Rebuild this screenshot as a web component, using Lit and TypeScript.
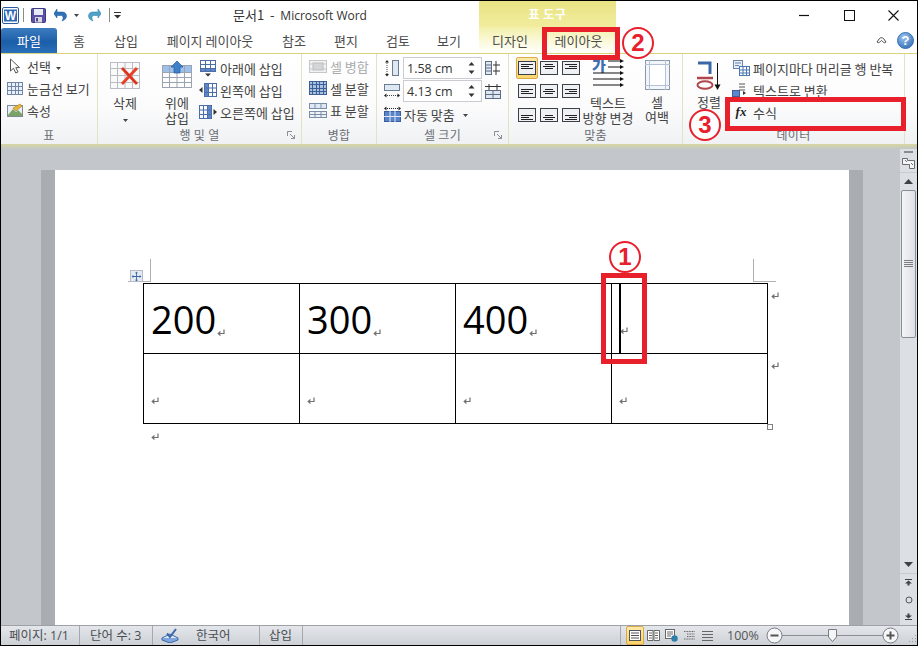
import { LitElement, html, css, svg } from "lit";
import { customElement } from "lit/decorators.js";

const grid = (w: number, h: number, cols: number, rows: number, stroke = "#8d9bb0", fill = "#fff") => {
  const v = [];
  for (let i = 0; i <= cols; i++) v.push(Math.round((i * (w - 1)) / cols) + 0.5);
  const r = [];
  for (let i = 0; i <= rows; i++) r.push(Math.round((i * (h - 1)) / rows) + 0.5);
  return html`<svg width="${w}" height="${h}" viewBox="0 0 ${w} ${h}"><rect x=".5" y=".5" width="${w - 1}" height="${h - 1}" fill="${fill}"/>${v.map((x) => svg`<line x1="${x}" x2="${x}" y1="0" y2="${h}" stroke="${stroke}"/>`)}${r.map((y) => svg`<line y1="${y}" y2="${y}" x1="0" x2="${w}" stroke="${stroke}"/>`)}</svg>`;
};

const mark = html`<svg class="pm" width="8" height="8" viewBox="0 0 8 8"><path d="M7 .5V4.5H1.5M3.5 2.5L1.2 4.5L3.5 6.5" fill="none" stroke="#707070" stroke-width="1.2"/></svg>`;

const align = (h: number, v: number) => {
  const ys = [[3, 5, 7], [5, 7, 9], [7, 9, 11]][v];
  const lens = [[12, 8, 12], [8, 12, 8], [12, 12, 8]];
  return html`<svg width="18" height="14" viewBox="0 0 18 14"><rect x=".5" y=".5" width="17" height="13" fill="#eef0f3" stroke="#3c3f45"/>${ys.map((y, i) => {
    const l = h === 1 ? lens[1][i] : lens[0][i];
    const x = h === 0 ? 3 : h === 1 ? (18 - l) / 2 : 15 - l;
    return svg`<rect x="${x}" y="${y}" width="${l}" height="1" fill="#222"/>`;
  })}</svg>`;
};

const I = {
  word: html`<svg width="17" height="17" viewBox="0 0 17 17"><rect x=".5" y=".5" width="16" height="16" rx="1.5" fill="#fff" stroke="#2b5a9e"/><rect x="2" y="2.5" width="13" height="12" fill="#2f68b4"/><text x="8.5" y="13" text-anchor="middle" font-family="Liberation Sans" font-weight="700" font-size="12" fill="#fff">W</text></svg>`,
  save: html`<svg width="15" height="15" viewBox="0 0 15 15"><rect x=".5" y=".5" width="14" height="14" rx="1" fill="#5b4fa6" stroke="#3a3a80"/><rect x="3" y="1" width="9" height="6" fill="#e8eaf4"/><rect x="4" y="9" width="7" height="5.5" fill="#d5d8e2"/><rect x="5" y="10" width="2" height="3.5" fill="#4a4a8a"/></svg>`,
  undo: html`<svg width="14" height="14" viewBox="0 0 14 14"><path d="M3 4H8.5C11 4 12.5 6 12.5 8C12.5 10 11 12 8 13C9.5 11 9.5 7.5 7.5 7.5H3V10L-.2 5.6L3 1Z" fill="#2f72b8" stroke="#1f558f" stroke-width=".5"/></svg>`,
  redo: html`<svg width="14" height="14" viewBox="0 0 14 14"><path d="M11 4H5.5C3 4 1.5 6 1.5 8C1.5 10 3 12 6 13C4.5 11 4.5 7.5 6.5 7.5H11V10L14.2 5.6L11 1Z" fill="#4fa3c9" stroke="#2d7ba3" stroke-width=".5"/></svg>`,
  drop: html`<svg width="5" height="3" viewBox="0 0 5 3"><path d="M0 0H5L2.5 3Z" fill="#444"/></svg>`,
  qatmore: html`<svg width="7" height="7" viewBox="0 0 7 7"><rect y="0" width="7" height="1" fill="#333"/><path d="M0 3H7L3.5 6.5Z" fill="#333"/></svg>`,
  min: html`<svg width="12" height="12" viewBox="0 0 12 12"><path d="M1 6.5H11" stroke="#111" stroke-width="1.2"/></svg>`,
  max: html`<svg width="11" height="11" viewBox="0 0 11 11"><rect x=".5" y=".5" width="10" height="10" fill="none" stroke="#111"/></svg>`,
  close: html`<svg width="11" height="11" viewBox="0 0 11 11"><path d="M.5 .5L10.5 10.5M10.5 .5L.5 10.5" stroke="#111" stroke-width="1.1"/></svg>`,
  up: html`<svg width="11" height="8" viewBox="0 0 11 8"><path d="M1 6L3.5 2.5C4.5 1.5 6.5 1.5 7.5 2.5L10 6C9 7.5 7.5 6.5 5.5 4.5C3.5 6.5 2 7.5 1 6Z" fill="none" stroke="#444"/></svg>`,
  help: html`<svg width="17" height="17" viewBox="0 0 17 17"><defs><radialGradient id="h" cx=".4" cy=".3" r=".8"><stop offset="0" stop-color="#9cc4ee"/><stop offset="1" stop-color="#2d6bb5"/></radialGradient></defs><circle cx="8.5" cy="8.5" r="8" fill="url(#h)" stroke="#3a72b5"/><text x="8.5" y="13" text-anchor="middle" font-family="Liberation Sans" font-weight="700" font-size="13" fill="#fff">?</text></svg>`,
  select: html`<svg width="14" height="16" viewBox="0 0 14 16"><path d="M2.5 1V13L5.5 10.2L7.8 15L10 14L7.8 9.6H11.5Z" fill="#fff" stroke="#555"/></svg>`,
  props: html`<svg width="16" height="14" viewBox="0 0 16 14"><rect x=".5" y="2.5" width="15" height="11" fill="#e8eef4" stroke="#7d8a9c"/><path d="M1 12L6 6L9 9L11 7L15 11V13H1Z" fill="#7aa366"/><path d="M6 5L13 1L15 3L9 8Z" fill="#e9b53c" stroke="#a67a18" stroke-width=".6"/></svg>`,
  del: html`<svg width="30" height="28" viewBox="0 0 30 28"><g stroke="#b9bcc2" fill="none"><rect x=".5" y=".5" width="29" height="26" fill="#fafafa"/><path d="M.5 6.5H30M.5 13.5H30M.5 20.5H30M7.5 0V27M15 0V27M22.5 0V27"/></g><path d="M12 6L27 22M27 6L12 22" stroke="#e8412a" stroke-width="3"/><path d="M12 6L27 22" stroke="#c2281a" stroke-width="1"/></svg>`,
  above: html`<svg width="30" height="28" viewBox="0 0 30 28"><rect x=".5" y="4.5" width="29" height="7" fill="#9dc0ea"/><g stroke="#9aa3af" fill="none"><rect x=".5" y="4.5" width="29" height="22" fill="none"/><path d="M.5 11.5H30M.5 16.5H30M.5 21.5H30M7.5 4V27M15 4V27M22.5 4V27"/></g><path d="M15 0L21 6H18V12H12V6H9Z" fill="#3f80c8" stroke="#1d5a9e" stroke-width=".7"/></svg>`,
  below: html`<svg width="16" height="17" viewBox="0 0 16 17"><rect x=".5" y="8.5" width="15" height="3" fill="#5f86c8"/><g stroke="#4a6ea8" fill="none"><rect x=".5" y=".5" width="15" height="11"/><path d="M.5 4.5H16M.5 8.5H16M5.5 0V12M10.5 0V12"/></g><path d="M8 16.5L5 13.5H11Z" fill="#333"/></svg>`,
  left: html`<svg width="18" height="14" viewBox="0 0 18 14"><rect x="5.5" y=".5" width="4" height="13" fill="#5f86c8"/><g stroke="#4a6ea8" fill="none"><rect x="5.5" y=".5" width="12" height="13"/><path d="M9.5 0V14M13.5 0V14M5 5H18M5 9.5H18"/></g><path d="M0 7L3.5 4V10Z" fill="#333"/></svg>`,
  right: html`<svg width="18" height="14" viewBox="0 0 18 14"><rect x="8.5" y=".5" width="4" height="13" fill="#5f86c8"/><g stroke="#4a6ea8" fill="none"><rect x=".5" y=".5" width="12" height="13"/><path d="M4.5 0V14M8.5 0V14M0 5H13M0 9.5H13"/></g><path d="M18 7L14.5 4V10Z" fill="#333"/></svg>`,
  merge: html`<svg width="18" height="13" viewBox="0 0 18 13"><rect x=".5" y=".5" width="17" height="12" fill="#f2f2f2" stroke="#c4c6c9"/><rect x="4" y="3" width="10" height="7" fill="#d4d5d7" stroke="#bcbdc0"/><path d="M0 4H4M0 9H4M14 4H18M14 9H18" stroke="#c4c6c9"/></svg>`,
  tsplit: html`<svg width="18" height="15" viewBox="0 0 18 15"><rect x=".5" y=".5" width="17" height="5" fill="#dfe8f3" stroke="#7a8ea8"/><rect x=".5" y="8.5" width="17" height="6" fill="#eef2f7" stroke="#7a8ea8"/><path d="M6 0V6M12 0V6M6 8V15M12 8V15M0 11.5H18" stroke="#7a8ea8"/></svg>`,
  rowh: html`<svg width="16" height="17" viewBox="0 0 16 17"><path d="M3 1V15" stroke="#444" stroke-dasharray="1 1"/><path d="M3 0L1 2.5H5ZM3 16.5L1 14H5Z" fill="#222"/><rect x="8.5" y=".5" width="6" height="15" fill="#dfe7f1" stroke="#6a7c94"/></svg>`,
  colw: html`<svg width="16" height="17" viewBox="0 0 16 17"><rect x=".5" y="1.5" width="15" height="6" fill="#dfe7f1" stroke="#6a7c94"/><path d="M1 12.5H15" stroke="#444" stroke-dasharray="1 1"/><path d="M0 12.5L2.5 10.5V14.5ZM16 12.5L13.5 10.5V14.5Z" fill="#222"/></svg>`,
  distr: html`<svg width="16" height="15" viewBox="0 0 16 15"><rect x=".5" y=".5" width="6" height="13" fill="#dfe7f1" stroke="#5c6d85"/><path d="M1 7H6M1 4H6M1 10H6" stroke="#5c6d85"/><path d="M8 4H15M8 10H15" stroke="#333"/><path d="M11 0V14" stroke="#333"/></svg>`,
  distc: html`<svg width="16" height="15" viewBox="0 0 16 15"><rect x=".5" y="6.5" width="15" height="8" fill="#dfe7f1" stroke="#5c6d85"/><path d="M8 6V15M0 10.5H16" stroke="#5c6d85"/><path d="M0 2.5H16M4 0V6M12 0V6" stroke="#333"/></svg>`,
  fit: html`<svg width="17" height="16" viewBox="0 0 17 16"><rect x=".5" y="5.5" width="16" height="10" fill="#5a84c8" stroke="#3a5f9e"/><path d="M0 10.5H17M6 5V16M11 5V16" stroke="#dfe8f5"/><path d="M1 2.5H16" stroke="#222" stroke-dasharray="1 1"/><path d="M0 2.5L2.5 .5V4.5ZM17 2.5L14.5 .5V4.5Z" fill="#222"/></svg>`,
  tdir: html`<svg width="32" height="33" viewBox="0 0 32 33" style="overflow:visible"><text x="0" y="13" font-family="Noto Sans CJK KR" font-weight="900" font-size="15" fill="#3d6fb4">가</text><g stroke="#111" fill="#111"><path d="M16 3H29M16 9H29M1 15H29M1 21H29M1 27H29" fill="none"/><path d="M32 3L28 1V5ZM32 9L28 7V11ZM32 15L28 13V17ZM32 21L28 19V23ZM32 27L28 25V29Z" stroke="none"/></g></svg>`,
  margin: html`<svg width="25" height="30" viewBox="0 0 25 30"><rect x=".5" y=".5" width="24" height="29" fill="#f2f5f9" stroke="#8a98aa"/><rect x="4.5" y="4.5" width="16" height="21" fill="#fff" stroke="#b3c2d4"/><path d="M0 4.5H25M0 25.5H25M4.5 0V30M20.5 0V30" stroke="#b3c2d4"/></svg>`,
  sort: html`<svg width="28" height="32" viewBox="0 0 28 32"><path d="M3 4H15V15" fill="none" stroke="#3a67a8" stroke-width="3"/><path d="M2 19H18" stroke="#b0454a" stroke-width="2.5"/><ellipse cx="10" cy="26" rx="7.5" ry="3.8" fill="none" stroke="#b0454a" stroke-width="2"/><path d="M22.5 4V27" stroke="#111"/><path d="M22.5 31L19.5 25.5H25.5Z" fill="#111"/></svg>`,
  repeat: html`<svg width="19" height="18" viewBox="0 0 19 18"><rect x="1.5" y="1.5" width="9" height="8" fill="#e8eff8" stroke="#6a83a8"/><rect x="7.5" y="7.5" width="10" height="9" fill="#fff" stroke="#4a78b0"/><path d="M7 11H18M7 14H18M11 7V17M14.5 7V17" stroke="#4a78b0"/><path d="M3 4H9M3 6.5H7" stroke="#6a83a8"/></svg>`,
  conv: html`<svg width="18" height="14" viewBox="0 0 18 14"><path d="M7 1H13M7 4H13M7 7H13" stroke="#555"/><rect x=".5" y="7.5" width="7" height="6" fill="#5f86c8" stroke="#3a5f9e"/><path d="M14 10L11 8V12Z" fill="#333"/></svg>`,
  launcher: html`<svg width="8" height="8" viewBox="0 0 8 8"><path d="M.5 5V.5H5" fill="none" stroke="#8b8e92"/><path d="M3 3L7.5 7.5M7.5 4V7.5H4" fill="none" stroke="#8b8e92"/></svg>`,
  spin: html`<svg width="7" height="16" viewBox="0 0 7 16"><path d="M3.5 2L6.5 5.5H.5ZM3.5 14L.5 10.5H6.5Z" fill="#333"/></svg>`,
  move: html`<svg width="11" height="11" viewBox="0 0 11 11"><path d="M5.5 0L7.2 2H6V5H9V3.8L11 5.5L9 7.2V6H6V9H7.2L5.5 11L3.8 9H5V6H2V7.2L0 5.5L2 3.8V5H5V2H3.8Z" fill="#3a68a8"/></svg>`,
  ruler: html`<svg width="13" height="11" viewBox="0 0 13 11"><path d="M.5 .5H5.5V2.5H12.5V10.5H7.5V6.5H.5Z" fill="#f4f5f6" stroke="#6b6e73"/><path d="M3 2L5 4M9 5L11 7" stroke="#6b6e73"/></svg>`,
  tri: html`<svg width="9" height="5" viewBox="0 0 9 5"><path d="M4.5 0L9 5H0Z" fill="#3e4146"/></svg>`,
  trid: html`<svg width="9" height="5" viewBox="0 0 9 5"><path d="M0 0H9L4.5 5Z" fill="#3e4146"/></svg>`,
  prev: html`<svg width="7" height="7" viewBox="0 0 7 7"><path d="M0 .5H7" stroke="#3e4146"/><path d="M3.5 1.5L7 4.5H4.5V6.5H2.5V4.5H0Z" fill="#3e4146"/></svg>`,
  next: html`<svg width="7" height="7" viewBox="0 0 7 7"><path d="M0 6.5H7" stroke="#3e4146"/><path d="M3.5 5.5L7 2.5H4.5V.5H2.5V2.5H0Z" fill="#3e4146"/></svg>`,
  ring: html`<svg width="8" height="8" viewBox="0 0 8 8"><circle cx="4" cy="4" r="3" fill="none" stroke="#555"/></svg>`,
  spell: html`<svg width="18" height="15" viewBox="0 0 18 15"><path d="M1 10L9 6L17 10L9 14Z" fill="#dfe8f5" stroke="#3a66a8"/><path d="M1 10V12L9 15L17 12V10" fill="#7fa6dc" stroke="#3a66a8"/><path d="M6 5.5L9 9L15 1" fill="none" stroke="#3a66a8" stroke-width="2"/></svg>`,
  vPrint: html`<svg width="12" height="11" viewBox="0 0 12 11"><rect x=".5" y=".5" width="11" height="10" fill="#fff" stroke="#555"/><path d="M2 3H10M2 5.5H10M2 8H10" stroke="#555"/></svg>`,
  vRead: html`<svg width="13" height="11" viewBox="0 0 13 11"><path d="M.5 .5H6V10.5H.5ZM7 .5H12.5V10.5H7Z" fill="#fff" stroke="#666"/><path d="M2 3H5M2 5.5H5M8 3H11M8 5.5H11M2 8H5M8 8H11" stroke="#666"/></svg>`,
  vWeb: html`<svg width="13" height="13" viewBox="0 0 13 13"><rect x=".5" y=".5" width="9" height="9" fill="#fff" stroke="#666"/><path d="M2 3H8M2 5H8M2 7H6" stroke="#666"/><circle cx="9.5" cy="9.5" r="3.2" fill="#2f7fa8"/></svg>`,
  vOut: html`<svg width="11" height="11" viewBox="0 0 11 11"><path d="M0 1.5H11M3 4H11M3 6.5H11M0 9H11" stroke="#666" stroke-dasharray="1 .6"/></svg>`,
  vDraft: html`<svg width="11" height="10" viewBox="0 0 11 10"><path d="M0 .5H11M0 3.5H11M0 6.5H11M0 9.5H11" stroke="#666"/></svg>`,
  minus: html`<svg width="17" height="17" viewBox="0 0 17 17"><circle cx="8.5" cy="8.5" r="7.5" fill="#f5f6f7" stroke="#777c83"/><path d="M4.5 8.5H12.5" stroke="#555" stroke-width="2"/></svg>`,
  plus: html`<svg width="17" height="17" viewBox="0 0 17 17"><circle cx="8.5" cy="8.5" r="7.5" fill="#f5f6f7" stroke="#777c83"/><path d="M4.5 8.5H12.5M8.5 4.5V12.5" stroke="#555" stroke-width="2"/></svg>`,
  thumb: html`<svg width="9" height="13" viewBox="0 0 9 13"><path d="M.5 .5H8.5V8L4.5 12.5L.5 8Z" fill="#f4f5f6" stroke="#777c83"/></svg>`,
  grips: html`<svg width="10" height="10" viewBox="0 0 10 10"><path d="M8 1h1v1H8zM5 4h1v1H5zM8 4h1v1H8zM2 7h1v1H2zM5 7h1v1H5zM8 7h1v1H8z" fill="#9a9ea4"/></svg>`,
};

const TABS: [string, number][] = [["홈", 44], ["삽입", 50], ["페이지 레이아웃", 118], ["참조", 50], ["편지", 54], ["검토", 50], ["보기", 52]];
const VALIGN = [0, 1, 2];

@customElement("app-root")
export class AppRoot extends LitElement {
  static styles = css`
    :host { display: block; position: relative; width: 918px; height: 646px; overflow: hidden; background: #fff; font: 13px/16px "Noto Sans CJK KR", "Noto Sans", sans-serif; color: #444; }
    svg { display: block; flex: none; }
    .win { box-sizing: border-box; height: 646px; border: 1px solid #000; display: flex; flex-direction: column; }
    .title { height: 26px; display: grid; grid-template-columns: 120px 358px 137px 1fr; flex: none; }
    .qat { display: flex; align-items: center; padding-left: 1px; }
    .qsep { width: 1px; height: 14px; background: #8a8a8a; }
    .ttl { text-align: center; line-height: 27px; color: #333; font-size: 13px; white-space: nowrap; }
    .ttl span { font-family: "Open Sans", sans-serif; font-size: 12px; }
    .ctxhead { background: linear-gradient(#e9e483, #f2eda0); color: #fff; text-align: center; line-height: 26px; font-size: 12px; font-weight: 700; letter-spacing: .5px; }
    .ctl { display: flex; align-items: center; padding-left: 182px; gap: 33px; }
    .ctl svg:nth-child(2) { margin-left: 1px; }
    .tabs { height: 27px; display: flex; flex: none; border-bottom: 1px solid #d9d47c; box-sizing: border-box; }
    .file { width: 56px; margin-top: 1px; height: 25px; background: linear-gradient(#3d7cc0, #1c5ea8 55%, #2a70ba); border-radius: 3px 3px 0 0; color: #fff; text-align: center; line-height: 26px; font-size: 13px; }
    .tab { text-align: center; line-height: 28px; color: #4c4c4c; font-size: 13px; flex: none; white-space: nowrap; }
    .ctxtabs { width: 137px; margin-left: 4px; display: flex; flex: none; background: linear-gradient(#f3efa9, #fbfadf 60%, #fffffa); }
    .tr { margin-left: auto; display: flex; align-items: center; gap: 10px; padding-right: 3px; }
    .ribbon { height: 90px; display: flex; flex: none; background: linear-gradient(#fff, #fbfbfc 60%, #eff1f3); }
    .g { display: flex; flex-direction: column; flex: none; box-sizing: border-box; border-right: 1px solid #e3e3c4; position: relative; }
    .gb { flex: 1; display: flex; min-height: 0; }
    .gl { height: 18px; flex: none; text-align: center; font-size: 12px; line-height: 17px; color: #6b6e73; letter-spacing: .3px; }
    .lau { position: absolute; right: 6px; bottom: 5px; }
    .col { display: flex; flex-direction: column; }
    .r { height: 22px; display: flex; align-items: center; gap: 3px; white-space: nowrap; font-size: 13px; flex: none; }
    .r > div:not(.ic):not(.num) { position: relative; top: 1px; }
    .ic { width: 18px; display: flex; justify-content: center; flex: none; }
    .dim { color: #a9abae; }
    .big { display: flex; flex-direction: column; align-items: center; font-size: 13px; line-height: 15px; text-align: center; flex: none; }
    .big svg + div { margin-top: 5px; }
    .num { box-sizing: border-box; width: 79px; height: 22px; border: 1px solid #c9ccd0; background: #fff; display: flex; align-items: center; justify-content: space-between; padding: 0 6px 0 3px; font: 12.5px "Open Sans", sans-serif; color: #333; }
    .al { display: grid; grid-template-columns: repeat(3, 22px); grid-auto-rows: 23.5px; justify-items: center; align-items: center; padding: 2px 0 0 7px; }
    .alon { background: linear-gradient(#fde9a8, #fbd56e); border: 1px solid #d9a94a; border-radius: 2px; box-sizing: content-box; display: flex; width: 18px; height: 14px; padding: 3px 1px; }
    .band { height: 5px; flex: none; background: linear-gradient(#d6d6a2, #c5c8c6); }
    .doc { flex: 1; min-height: 0; display: flex; background: #c3c7cb; }
    .dm { flex: 1; min-width: 0; padding: 21px 37px 0 40px; display: flex; overflow: hidden; }
    .shade { flex: 1; padding: 0 14px; background: #a9acb0; display: flex; }
    .page { flex: 1; background: #fff; padding: 113px 0 0 88px; position: relative; }
    .crop { position: absolute; width: 23px; height: 23px; top: 89px; border: 0 solid #b0b0b0; box-sizing: border-box; }
    .cl { left: 73px; border-right-width: 1px; border-bottom-width: 1px; }
    .cr { left: 698px; border-left-width: 1px; border-bottom-width: 1px; }
    .hd { position: absolute; left: 75px; top: 100px; width: 13px; height: 12px; background: #e4e9f2; border: 1px solid #b6bcc6; box-sizing: border-box; display: flex; align-items: center; justify-content: center; }
    .hd svg { transform: scale(.9); }
    .tb { display: grid; grid-template-columns: repeat(4, 156px); grid-auto-rows: 70px; width: 625px; border-left: 1px solid #000; border-top: 1px solid #000; box-sizing: border-box; }
    .c { border-right: 1px solid #000; border-bottom: 1px solid #000; padding-left: 7px; display: flex; align-items: flex-end; box-sizing: border-box; position: relative; font: 38px/52px "Open Sans", sans-serif; color: #000; padding-bottom: 8px; }
    .c .pm { margin: 0 0 8px 1px; }
    .e { padding-bottom: 0; }
    .e .pm { margin: 0 0 18px 0; }
    .caret { position: absolute; left: 7px; top: 0; width: 2px; height: 69px; background: #000; }
    .rowend { position: absolute; left: 716px; }
    .pg { margin: 9px 0 0 8px; }
    .rz { position: absolute; left: 712px; top: 254px; width: 6px; height: 6px; border: 1px solid #808080; background: #fff; box-sizing: border-box; }
    .sb { width: 17px; flex: none; background: #dcdfe3; display: flex; flex-direction: column; align-items: center; box-sizing: border-box; }
    .sp { height: 5px; width: 100%; display: flex; justify-content: center; align-items: center; }
    .sp i { display: block; width: 9px; height: 2px; background: #8a8d92; }
    .rl { height: 18px; width: 100%; display: flex; justify-content: center; align-items: center; border-bottom: 1px solid #c8ccd0; }
    .au { height: 17px; display: flex; align-items: center; }
    .th { box-sizing: border-box; width: 15px; height: 148px; border: 1px solid #8a8f96; border-radius: 2px; background: linear-gradient(90deg, #f4f5f7, #dde0e5); display: flex; justify-content: center; align-items: center; }
    .sf { flex: 1; }
    .bt { height: 17px; width: 100%; display: flex; justify-content: center; align-items: center; }
    .bt:nth-last-child(4) { border-bottom: 1px solid #c8ccd0; }
    .status { height: 20px; flex: none; display: flex; align-items: center; background: linear-gradient(#e3e6ea, #cdd1d6); border-top: 1px solid #9ea2a7; box-sizing: border-box; font-size: 12.5px; color: #4b4e53; }
    .st { height: 100%; box-sizing: border-box; border-right: 1px solid #a5a8ad; display: flex; align-items: center; padding-left: 8px; white-space: nowrap; flex: none; }
    .st span { font-family: "Open Sans", "Noto Sans CJK KR", sans-serif; }
    .sr { margin-left: auto; display: flex; align-items: center; height: 100%; }
    .vw { display: flex; align-items: center; border-left: 1px solid #a5a8ad; padding-left: 5px; height: 100%; }
    .vb { width: 18px; height: 19px; display: flex; align-items: center; justify-content: center; }
    .von { background: linear-gradient(#fdeaaa, #fbd268); border: 1px solid #d9a94a; border-radius: 2px; box-sizing: border-box; }
    .pct { font: 12.5px "Open Sans", sans-serif; color: #555; margin: 0 6px 0 11px; width: 33px; }
    .sl { width: 101px; height: 1px; background: #8a8e94; position: relative; margin: 0 -1px; }
    .sl svg { position: absolute; left: 46px; top: -6px; }
    .gr { margin: 6px 0 0 8px; }
    .ann { position: absolute; box-sizing: border-box; border: 5px solid #e8202c; }
    .n { position: absolute; box-sizing: border-box; width: 32px; height: 32px; border: 2px solid #e8202c; border-radius: 50%; color: #e8202c; font: 700 24px/28px "Liberation Sans", sans-serif; text-align: center; background: #fff; }
  `;

  render() {
    return html`
      <div class="win">
        <div class="title">
          <div class="qat">
            ${I.word}<div class="qsep" style="margin:0 7px 0 4px"></div>${I.save}
            <div style="width:9px"></div>${I.undo}<div style="width:6px"></div>${I.drop}
            <div style="width:9px"></div>${I.redo}<div style="width:9px"></div><div class="qsep"></div>
            <div style="width:4px"></div>${I.qatmore}
          </div>
          <div class="ttl">문서1 &nbsp;-&nbsp; <span>Microsoft Word</span></div>
          <div class="ctxhead">표 도구</div>
          <div class="ctl">${I.min}${I.max}${I.close}</div>
        </div>
        <div class="tabs">
          <div class="file">파일</div>
          ${TABS.map(([t, w]) => html`<div class="tab" style="width:${w}px">${t}</div>`)}
          <div class="ctxtabs">
            <div class="tab" style="width:62px">디자인</div>
            <div class="tab" style="width:75px">레이아웃</div>
          </div>
          <div class="tr">${I.up}${I.help}</div>
        </div>
        ${this.ribbon()}
        <div class="band"></div>
        <div class="doc">
          <div class="dm"><div class="shade">${this.page()}</div></div>
          <div class="sb">
            <div class="sp"><i></i></div>
            <div class="rl">${I.ruler}</div>
            <div class="au">${I.tri}</div>
            <div class="th"><svg width="9" height="8" viewBox="0 0 9 8"><path d="M0 .5H9M0 2.5H9M0 4.5H9M0 6.5H9" stroke="#7a7e84"/></svg></div>
            <div class="sf"></div>
            <div class="bt">${I.trid}</div>
            <div class="bt">${I.prev}</div>
            <div class="bt">${I.ring}</div>
            <div class="bt">${I.next}</div>
          </div>
        </div>
        <div class="status">
          <div class="st" style="width:79px"><span>페이지: 1/1</span></div>
          <div class="st" style="width:73px;padding-left:10px"><span>단어 수: 3</span></div>
          <div class="st" style="width:107px;gap:17px">${I.spell}<span>한국어</span></div>
          <div class="st" style="width:43px;padding-left:9px"><span>삽입</span></div>
          <div class="sr">
            <div class="vw">
              <div class="vb von">${I.vPrint}</div><div class="vb">${I.vRead}</div><div class="vb">${I.vWeb}</div><div class="vb">${I.vOut}</div><div class="vb">${I.vDraft}</div>
            </div>
            <div class="pct">100%</div>
            ${I.minus}<div class="sl">${I.thumb}</div>${I.plus}
            <div class="gr">${I.grips}</div>
          </div>
        </div>
      </div>
      <div class="ann" style="left:542px;top:27px;width:78px;height:33px"></div>
      <div class="ann" style="left:725px;top:97px;width:181px;height:34px"></div>
      <div class="ann" style="left:601px;top:273px;width:46px;height:91px"></div>
      <div class="n" style="left:609px;top:241px">1</div>
      <div class="n" style="left:622px;top:27px">2</div>
      <div class="n" style="left:689px;top:109px">3</div>
    `;
  }

  ribbon() {
    const row = (icon: unknown, label: unknown, cls = "") =>
      html`<div class="r ${cls}"><div class="ic">${icon}</div><div>${label}</div></div>`;
    return html`
      <div class="ribbon">
        <div class="g" style="width:97px">
          <div class="gb col" style="padding:1px 0 0 5px">
            ${row(I.select, html`선택 <span style="display:inline-block;vertical-align:2px;margin-left:2px">${I.drop}</span>`)}
            ${row(grid(16, 13, 4, 3, "#6f86a8", "#eaf0f8"), "눈금선 보기")}
            ${row(I.props, "속성")}
          </div>
          <div class="gl">표</div>
        </div>
        <div class="g" style="width:204px">
          <div class="gb" style="padding-top:8px">
            <div class="big" style="width:36px;margin-left:9px">${I.del}<div style="margin-top:5px">삭제</div><div style="margin-top:9px;display:flex;justify-content:center">${I.drop}</div></div>
            <div class="big" style="width:38px;margin-left:15px;margin-top:-1px">${I.above}<div style="margin-top:6px">위에<br />삽입</div></div>
            <div class="col" style="margin:-5px 0 0 3px">
              ${row(I.below, "아래에 삽입")}${row(I.left, "왼쪽에 삽입")}${row(I.right, "오른쪽에 삽입")}
            </div>
          </div>
          <div class="gl">행 및 열</div>
          <div class="lau">${I.launcher}</div>
        </div>
        <div class="g" style="width:75px">
          <div class="gb col" style="padding:1px 0 0 7px">
            ${row(I.merge, "셀 병합", "dim")}${row(grid(18, 14, 5, 4, "#3d5f94", "#a9c2e4"), "셀 분할")}${row(I.tsplit, "표 분할")}
          </div>
          <div class="gl">병합</div>
        </div>
        <div class="g" style="width:132px">
          <div class="gb col" style="padding:3px 0 0 7px;gap:1px">
            <div class="r">${I.rowh}<div class="num">1.58 cm ${I.spin}</div>${I.distr}</div>
            <div class="r">${I.colw}<div class="num">4.13 cm ${I.spin}</div>${I.distc}</div>
            <div class="r">${I.fit}<div>자동 맞춤</div><div style="margin-left:5px">${I.drop}</div></div>
          </div>
          <div class="gl">셀 크기</div>
          <div class="lau">${I.launcher}</div>
        </div>
        <div class="g" style="width:174px">
          <div class="gb">
            <div class="al">
              ${VALIGN.map((v) => [0, 1, 2].map((h) => (v === 0 && h === 0 ? html`<div class="alon">${align(0, 0)}</div>` : align(h, v))))}
            </div>
            <div class="big" style="width:58px;margin:4px 0 0 -3px">${I.tdir}<div style="margin-top:4px">텍스트<br />방향 변경</div></div>
            <div class="big" style="width:36px;margin:6px 0 0 2px">${I.margin}<div style="margin-top:4px">셀<br />여백</div></div>
          </div>
          <div class="gl">맞춤</div>
        </div>
        <div class="g" style="width:222px">
          <div class="gb">
            <div class="big" style="width:30px;margin:5px 0 0 11px">${I.sort}<div style="margin-top:3px">정렬</div></div>
            <div class="col" style="margin:3px 0 0 8px">
              ${row(I.repeat, "페이지마다 머리글 행 반복")}${row(I.conv, "텍스트로 변환")}
              ${row(html`<span style="font:italic 700 13px 'Liberation Serif',serif;color:#222">fx</span>`, "수식")}
            </div>
          </div>
          <div class="gl">데이터</div>
        </div>
      </div>
    `;
  }

  page() {
    return html`
      <div class="page">
        <div class="crop cl"></div><div class="crop cr"></div>
        <div class="hd">${I.move}</div>
        <div class="tb">
          <div class="c">200${mark}</div>
          <div class="c">300${mark}</div>
          <div class="c">400${mark}</div>
          <div class="c e"><div class="caret"></div><span style="margin:0 0 0 1px;display:block">${mark}</span></div>
          <div class="c e">${mark}</div>
          <div class="c e">${mark}</div>
          <div class="c e">${mark}</div>
          <div class="c e">${mark}</div>
        </div>
        <div class="rowend" style="top:122px">${mark}</div>
        <div class="rowend" style="top:192px">${mark}</div>
        <div class="rz"></div>
        <div class="pm pg">${mark}</div>
      </div>
    `;
  }
}
